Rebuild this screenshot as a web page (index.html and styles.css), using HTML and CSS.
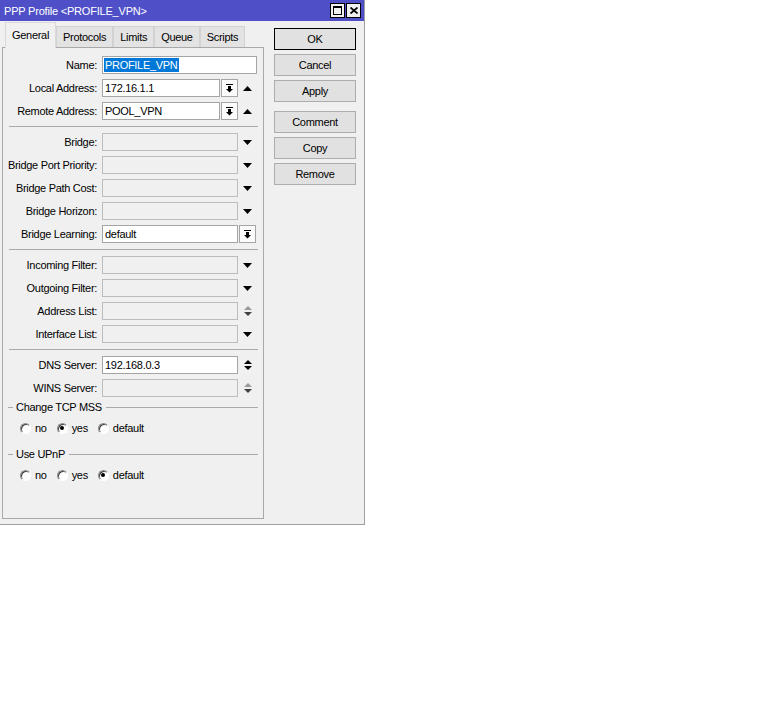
FILE: index.html
```html
<!DOCTYPE html>
<html lang="en">
<head>
    <meta charset="UTF-8">
    <title>PPP Profile &lt;PROFILE_VPN&gt;</title>
    <link rel="stylesheet" href="styles.css">
</head>
<body>
<div class="window">
    <div class="titlebar">
        <span class="title">PPP Profile &lt;PROFILE_VPN&gt;</span>
        <div class="title-btns">
            <span class="tbtn"><svg width="9" height="9" viewBox="0 0 9 9"><rect x="0.5" y="0.5" width="8" height="8" fill="none" stroke="#000"/><rect x="0" y="0" width="9" height="2"/></svg></span>
            <span class="tbtn"><svg width="8" height="7" viewBox="0 0 8 7"><path d="M0.5 0.5 L7.5 6.5 M7.5 0.5 L0.5 6.5" stroke="#000" stroke-width="1.7"/></svg></span>
        </div>
    </div>

    <div class="content">
        <div class="left">
            <div class="tabs">
                <div class="tab active">General</div>
                <div class="tab">Protocols</div>
                <div class="tab">Limits</div>
                <div class="tab">Queue</div>
                <div class="tab">Scripts</div>
            </div>

            <div class="panel">
                <div class="row">
                    <span class="lbl">Name:</span>
                    <div class="inp w155"><span class="sel">PROFILE_VPN</span></div>
                </div>
                <div class="row">
                    <span class="lbl">Local Address:</span>
                    <div class="inp w118">172.16.1.1</div>
                    <span class="ddbtn"><svg width="7" height="9" viewBox="0 0 7 9"><rect width="7" height="1"/><rect x="2" y="2" width="3" height="3"/><polygon points="0,5 7,5 3.5,8.5"/></svg></span>
                    <span class="arr"><svg width="9" height="5" viewBox="0 0 9 5"><polygon points="0,5 9,5 4.5,0"/></svg></span>
                </div>
                <div class="row">
                    <span class="lbl">Remote Address:</span>
                    <div class="inp w118">POOL_VPN</div>
                    <span class="ddbtn"><svg width="7" height="9" viewBox="0 0 7 9"><rect width="7" height="1"/><rect x="2" y="2" width="3" height="3"/><polygon points="0,5 7,5 3.5,8.5"/></svg></span>
                    <span class="arr"><svg width="9" height="5" viewBox="0 0 9 5"><polygon points="0,5 9,5 4.5,0"/></svg></span>
                </div>

                <div class="sep"></div>

                <div class="row">
                    <span class="lbl">Bridge:</span>
                    <div class="inp off w136"></div>
                    <span class="arr"><svg width="9" height="5" viewBox="0 0 9 5"><polygon points="0,0 9,0 4.5,5"/></svg></span>
                </div>
                <div class="row">
                    <span class="lbl">Bridge Port Priority:</span>
                    <div class="inp off w136"></div>
                    <span class="arr"><svg width="9" height="5" viewBox="0 0 9 5"><polygon points="0,0 9,0 4.5,5"/></svg></span>
                </div>
                <div class="row">
                    <span class="lbl">Bridge Path Cost:</span>
                    <div class="inp off w136"></div>
                    <span class="arr"><svg width="9" height="5" viewBox="0 0 9 5"><polygon points="0,0 9,0 4.5,5"/></svg></span>
                </div>
                <div class="row">
                    <span class="lbl">Bridge Horizon:</span>
                    <div class="inp off w136"></div>
                    <span class="arr"><svg width="9" height="5" viewBox="0 0 9 5"><polygon points="0,0 9,0 4.5,5"/></svg></span>
                </div>
                <div class="row">
                    <span class="lbl">Bridge Learning:</span>
                    <div class="inp w136">default</div>
                    <span class="ddbtn"><svg width="7" height="9" viewBox="0 0 7 9"><rect width="7" height="1"/><rect x="2" y="2" width="3" height="3"/><polygon points="0,5 7,5 3.5,8.5"/></svg></span>
                </div>

                <div class="sep"></div>

                <div class="row">
                    <span class="lbl">Incoming Filter:</span>
                    <div class="inp off w136"></div>
                    <span class="arr"><svg width="9" height="5" viewBox="0 0 9 5"><polygon points="0,0 9,0 4.5,5"/></svg></span>
                </div>
                <div class="row">
                    <span class="lbl">Outgoing Filter:</span>
                    <div class="inp off w136"></div>
                    <span class="arr"><svg width="9" height="5" viewBox="0 0 9 5"><polygon points="0,0 9,0 4.5,5"/></svg></span>
                </div>
                <div class="row">
                    <span class="lbl">Address List:</span>
                    <div class="inp off w136"></div>
                    <span class="arr"><svg width="8" height="10" viewBox="0 0 8 10"><polygon points="0,4 8,4 4,0" fill="#9a9a9a"/><polygon points="0,6 8,6 4,10" fill="#404040"/></svg></span>
                </div>
                <div class="row">
                    <span class="lbl">Interface List:</span>
                    <div class="inp off w136"></div>
                    <span class="arr"><svg width="9" height="5" viewBox="0 0 9 5"><polygon points="0,0 9,0 4.5,5"/></svg></span>
                </div>

                <div class="sep"></div>

                <div class="row">
                    <span class="lbl">DNS Server:</span>
                    <div class="inp w136">192.168.0.3</div>
                    <span class="arr"><svg width="8" height="10" viewBox="0 0 8 10"><polygon points="0,4 8,4 4,0"/><polygon points="0,6 8,6 4,10"/></svg></span>
                </div>
                <div class="row">
                    <span class="lbl">WINS Server:</span>
                    <div class="inp off w136"></div>
                    <span class="arr"><svg width="8" height="10" viewBox="0 0 8 10"><polygon points="0,4 8,4 4,0" fill="#9a9a9a"/><polygon points="0,6 8,6 4,10" fill="#404040"/></svg></span>
                </div>

                <div class="grp">Change TCP MSS</div>
                <div class="radios">
                    <span class="radio"><span class="dot"></span>no</span>
                    <span class="radio"><span class="dot on"></span>yes</span>
                    <span class="radio"><span class="dot"></span>default</span>
                </div>

                <div class="grp">Use UPnP</div>
                <div class="radios">
                    <span class="radio"><span class="dot"></span>no</span>
                    <span class="radio"><span class="dot"></span>yes</span>
                    <span class="radio"><span class="dot on"></span>default</span>
                </div>
            </div>
        </div>

        <div class="buttons">
            <div class="btn def">OK</div>
            <div class="btn">Cancel</div>
            <div class="btn gap">Apply</div>
            <div class="btn">Comment</div>
            <div class="btn">Copy</div>
            <div class="btn">Remove</div>
        </div>
    </div>
</div>
</body>
</html>
```

FILE: styles.css
```css
*{
    margin: 0;
    padding: 0;
    box-sizing: border-box;
}
body{
    background-color: #fff;
    font-family: "Liberation Sans", Arial, sans-serif;
    font-size: 11px;
    letter-spacing: -0.3px;
    color: #000;
}
.window{
    width: 365px;
    height: 525px;
    background-color: #f0f0f0;
    border-right: 1px solid #a0a0a0;
    border-bottom: 1px solid #a0a0a0;
    box-shadow: 0 1px 0 #000;
    display: flex;
    flex-direction: column;
}
.titlebar{
    height: 21px;
    background-color: #4f50c8;
    color: #fff;
    display: flex;
    align-items: center;
    justify-content: space-between;
    padding: 0 3px 0 4px;
}
.title{
    letter-spacing: -0.2px;
}
.title-btns{
    display: flex;
    gap: 1px;
}
.tbtn{
    width: 15px;
    height: 15px;
    background-color: #f0f0f0;
    border: 1px solid #000;
    display: flex;
    align-items: center;
    justify-content: center;
}
.content{
    flex: 1;
    display: flex;
}
.left{
    width: 264px;
    padding-left: 2px;
}
.tabs{
    display: flex;
    align-items: flex-end;
    height: 25px;
    margin-top: 1px;
    padding-left: 3px;
}
.tab{
    height: 21px;
    padding: 0 6px;
    border: 1px solid #d2d2d2;
    border-bottom: none;
    background-color: #e3e3e3;
    display: flex;
    align-items: center;
}
.tab.active{
    height: 26px;
    margin-bottom: -1px;
    padding-bottom: 2px;
    background-color: #f0f0f0;
    border-color: #d9d9d9;
    position: relative;
    z-index: 1;
}
.panel{
    height: 472px;
    border: 1px solid #a9a9a9;
    padding-top: 8px;
    display: flex;
    flex-direction: column;
}
.row{
    display: flex;
    align-items: center;
    height: 18px;
    margin-bottom: 5px;
}
.lbl{
    width: 95px;
    margin-right: 4px;
    padding-right: 1px;
    text-align: right;
    white-space: nowrap;
}
.inp{
    height: 18px;
    border: 1px solid #a5a5a5;
    background-color: #fff;
    padding-left: 2px;
    line-height: 16px;
    white-space: nowrap;
    overflow: hidden;
}
.inp.off{
    background-color: #f0f0f0;
    border-color: #bcbcbc;
}
.w155{ width: 155px; padding-left: 1px; }
.w136{ width: 136px; }
.w118{ width: 118px; }
.sel{
    display: inline-block;
    background-color: #0078d7;
    color: #fff;
    line-height: 14px;
    padding: 0 1px;
    vertical-align: top;
    margin-top: 1px;
}
.ddbtn{
    width: 17px;
    height: 18px;
    margin-left: 1px;
    border: 1px solid #a5a5a5;
    background-color: #fbfbfb;
    display: flex;
    align-items: center;
    justify-content: center;
}
.arr{
    width: 19px;
    display: flex;
    align-items: center;
    justify-content: center;
}
.sep{
    height: 1px;
    flex-shrink: 0;
    background-color: #a9a9a9;
    margin: 1px 5px 6px 6px;
}
.grp{
    display: flex;
    align-items: center;
    height: 14px;
    margin: -2px 5px 7px 5px;
}
.grp::before{
    content: "";
    width: 5px;
    height: 1px;
    background-color: #a9a9a9;
    margin-right: 3px;
}
.grp::after{
    content: "";
    flex: 1;
    height: 1px;
    background-color: #a9a9a9;
    margin-left: 4px;
}
.radios{
    display: flex;
    align-items: center;
    height: 14px;
    padding-left: 17px;
    margin-bottom: 14px;
}
.radio{
    display: flex;
    align-items: center;
    margin-right: 10px;
}
.dot{
    width: 11px;
    height: 11px;
    border-radius: 50%;
    background-color: #fff;
    border: 1px solid;
    border-color: #8a8a8a #fff #fff #8a8a8a;
    box-shadow: inset 1px 1px 0 #404040;
    margin-right: 4px;
    display: flex;
    align-items: center;
    justify-content: center;
}
.dot.on::after{
    content: "";
    width: 4px;
    height: 4px;
    border-radius: 50%;
    background-color: #000;
}
.buttons{
    margin-left: 10px;
    padding-top: 7px;
    display: flex;
    flex-direction: column;
}
.btn{
    width: 82px;
    height: 22px;
    margin-bottom: 4px;
    border: 1px solid #adadad;
    background-color: #e1e1e1;
    display: flex;
    align-items: center;
    justify-content: center;
}
.btn.def{
    border-color: #000;
}
.btn.gap{
    margin-bottom: 9px;
}
```
